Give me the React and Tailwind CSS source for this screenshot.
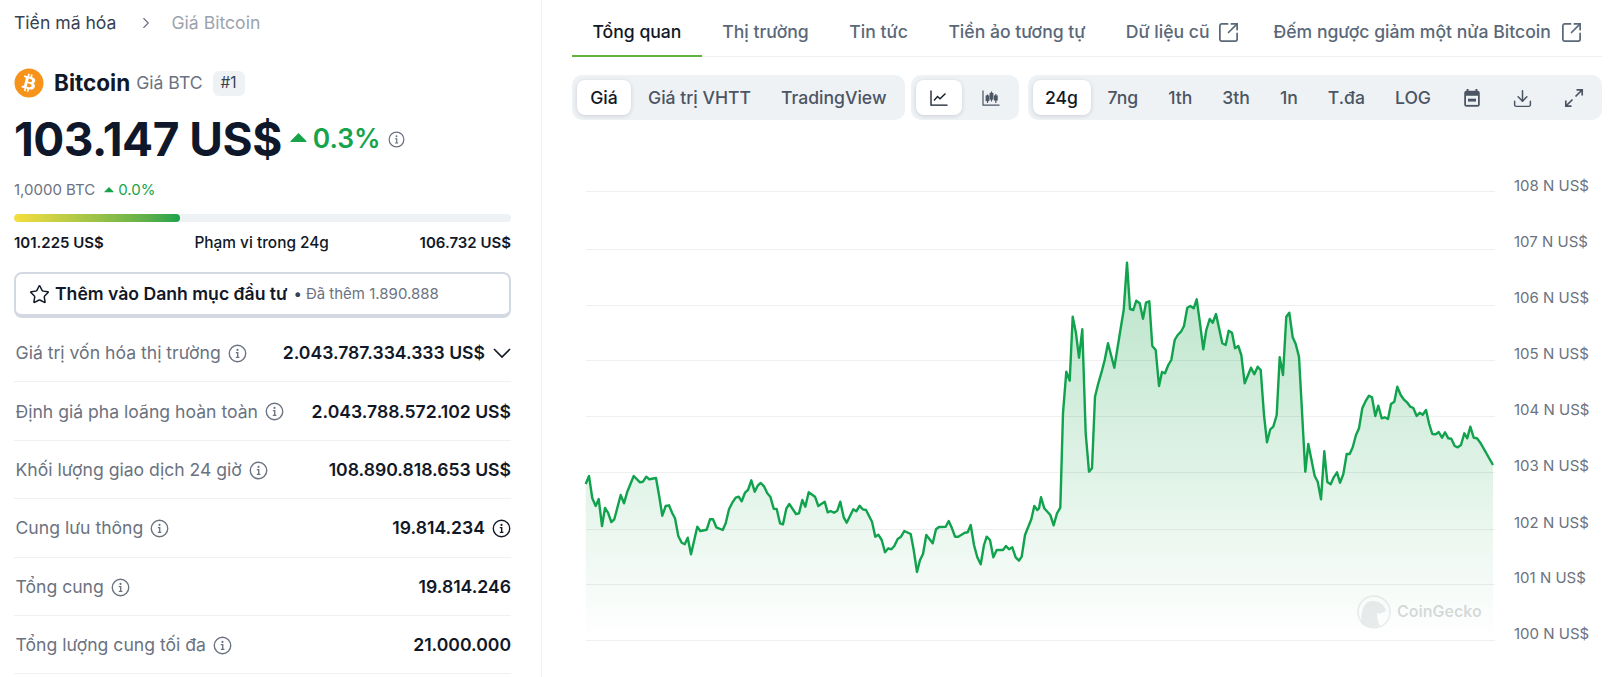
import { Star, ChevronRight, SquareArrowOutUpRight, Download } from 'lucide-react';
import { FaBitcoin } from 'react-icons/fa';

// traced from the reference: [x, y] in crop pixels (3x), converted to page coords below
const leftTrace = [50,732,60,708,70,775,80,798,89,777,99,858,108,804,117,818,127,846,136,838,155,765,165,790,175,755,194,708,213,727,222,725,232,710,241,718,261,714,271,770,280,827,290,798,300,796,310,820,318,835,328,888,338,908,347,913,356,893,366,943,385,860,394,873,413,869,423,838,432,838,442,862,461,870,470,850,480,808,490,788,500,773,509,770,518,784,528,758,537,750,547,721,557,755,566,737,575,729,585,739,595,760,604,770,614,806,623,807,633,850,642,853,652,806,661,792,681,822,690,820,700,780,709,800,719,757,738,770,748,798,767,785,776,817,785,813,795,818,805,812,814,785,824,832,833,848,853,808,862,814,872,797,881,808,891,810,909,845,919,890,928,884,938,900,948,937,958,925,967,928,976,918,986,897,996,890,1006,873,1025,882,1034,930,1044,996,1053,960,1062,942,1072,885,1091,910,1101,868,1110,861,1130,860,1139,843,1149,865,1158,890,1168,890,1187,878,1196,877,1205,855,1215,915,1225,952,1235,973,1245,915,1253,890,1263,900,1273,952,1283,930,1302,930,1311,918,1320,928,1330,922,1340,952,1350,962,1358,950,1368,885,1387,838,1396,798,1405,810];
const rightTrace = [0,805,6,772,16,805,34,825,44,856,54,820,64,803,72,520,82,395,92,422,101,230,111,280,120,353,130,268,140,580,150,695,159,685,168,470,178,430,188,395,197,360,207,310,226,383,245,265,254,210,264,68,273,207,283,210,292,182,302,190,312,236,321,188,331,184,340,318,350,330,360,438,369,396,378,400,388,375,397,360,407,300,416,285,426,275,435,258,445,203,454,198,464,205,473,178,483,250,493,328,502,270,512,237,521,248,531,222,550,310,560,315,569,272,579,278,588,325,598,318,607,345,617,430,636,383,646,403,656,380,665,390,675,525,684,607,694,568,703,560,713,525,722,352,732,405,742,230,751,218,761,292,770,312,780,350,799,695,808,612,827,708,836,725,846,778,856,634,865,726,875,733,884,712,894,697,903,728,913,703,923,642,932,642,941,622,951,585,960,565,970,505,980,483,990,467,999,472,1009,528,1018,497,1028,535,1037,532,1047,537,1056,492,1066,485,1075,440,1085,465,1094,478,1104,487,1114,500,1123,504,1133,528,1142,518,1151,524,1161,510,1170,550,1180,582,1190,583,1199,576,1209,593,1218,577,1228,595,1237,596,1247,618,1256,622,1266,615,1276,580,1285,595,1294,560,1304,593,1314,595,1324,608,1362,675];

const toPoints = (trace, originX) => {
    const pts = [];
    for (let i = 0; i < trace.length; i += 2) {
        pts.push(`${(originX + trace[i] / 3).toFixed(1)},${(240 + trace[i + 1] / 3).toFixed(1)}`);
    }
    return pts;
};
const linePoints = [...toPoints(leftTrace, 570), ...toPoints(rightTrace, 1040)].join(' ');
const areaPoints = `586.7,640 ${linePoints} 1494,640`;

const gridLines = [191, 249, 305, 360, 416, 472, 529, 584, 640];
const axisLabels = [
    ['108 N US$', 186], ['107 N US$', 242], ['106 N US$', 298], ['105 N US$', 354], ['104 N US$', 410],
    ['103 N US$', 466], ['102 N US$', 523], ['101 N US$', 578], ['100 N US$', 634],
];

const stats = [
    { label: 'Giá trị vốn hóa thị trường', value: '2.043.787.334.333 US$', chevron: true },
    { label: 'Định giá pha loãng hoàn toàn', value: '2.043.788.572.102 US$' },
    { label: 'Khối lượng giao dịch 24 giờ', value: '108.890.818.653 US$' },
    { label: 'Cung lưu thông', value: '19.814.234', info: true },
    { label: 'Tổng cung', value: '19.814.246' },
    { label: 'Tổng lượng cung tối đa', value: '21.000.000' },
];

const tabs = [
    { name: 'Thị trường', pad: 'px-[20.3px]' },
    { name: 'Tin tức', pad: 'px-[20.3px]' },
    { name: 'Tiền ảo tương tự', pad: 'px-[20.3px]' },
    { name: 'Dữ liệu cũ', pad: 'pl-[20px] pr-[14px]', external: 'ml-[7px]' },
    { name: 'Đếm ngược giảm một nửa Bitcoin', pad: 'px-[20px]', external: 'ml-[9px]' },
];

function InfoIcon({ className }) {
    return (
        <svg viewBox="0 0 18 18" fill="none" stroke="currentColor" className={className}>
            <circle cx="9" cy="9" r="7.8" strokeWidth="1.3" />
            <circle cx="9" cy="5.6" r="1" fill="currentColor" stroke="none" />
            <path d="M7.4 8.2H9.2V12.6M7.4 12.7H10.8" strokeWidth="1.3" />
        </svg>
    );
}

function Caret({ className }) {
    return (
        <svg viewBox="0 0 16 10" className={className}>
            <path d="M8 .8 15.4 8.4a.5.5 0 0 1-.4.8H1a.5.5 0 0 1-.4-.8Z" fill="currentColor" />
        </svg>
    );
}

function LineIcon() {
    return (
        <svg viewBox="0 0 18 18" fill="none" stroke="currentColor" strokeWidth="1.3" className="w-[18px] h-[18px]">
            <path d="M1 1.5V16.2H17.5" />
            <path d="M4 11.5 7.5 7.5 10 9.8 15.5 4.5" />
        </svg>
    );
}

function CandleIcon() {
    return (
        <svg viewBox="0 0 18 18" fill="none" stroke="currentColor" strokeWidth="1.2" className="w-[18px] h-[18px]">
            <path d="M1 1.5V16.2H17.5" />
            <path d="M5.5 5.5V14M9.5 2.5V12.5M13.8 5V14" />
            <rect x="4.2" y="7" width="2.6" height="4.5" fill="currentColor" />
            <rect x="8.2" y="4.5" width="2.6" height="5.5" fill="currentColor" />
            <rect x="12.5" y="7" width="2.6" height="4" fill="currentColor" />
        </svg>
    );
}

function CalendarIcon() {
    return (
        <svg viewBox="0 0 18 18" className="w-[20px] h-[20px]">
            <path d="M5 .8V3M13 .8V3" stroke="currentColor" strokeWidth="1.8" />
            <rect x="2" y="2.4" width="14" height="14.4" rx="2" fill="currentColor" />
            <rect x="3.6" y="7" width="10.8" height="8.2" fill="#eff2f5" />
            <rect x="5.4" y="9.6" width="7.2" height="2.6" fill="currentColor" />
        </svg>
    );
}

function ExpandIcon() {
    return (
        <svg viewBox="0 0 20 20" fill="none" stroke="currentColor" strokeWidth="1.7" className="w-[20px] h-[20px]">
            <path d="M12.5 1.8H18.2V7.5M18 2 11.5 8.5M1.8 12.5V18.2H7.5M2 18 8.5 11.5" />
        </svg>
    );
}

function Pill({ active, children, className = '' }) {
    return (
        <div className={`h-[35px] pt-[1px] flex items-center justify-center rounded-lg ${active ? 'bg-white shadow-[0_1px_4px_rgba(15,23,42,0.16)] text-[#111827]' : 'text-[#4b5563]'} ${className}`}>
            {children}
        </div>
    );
}

function Chart() {
    return (
        <svg viewBox="573 120 1040 557" className="w-[1040px] h-[557px] block">
            <defs>
                <linearGradient id="areaFill" gradientUnits="userSpaceOnUse" x1="0" y1="262" x2="0" y2="640">
                    <stop offset="0" stopColor="#16a34a" stopOpacity="0.3" />
                    <stop offset="1" stopColor="#16a34a" stopOpacity="0" />
                </linearGradient>
            </defs>
            <polygon points={areaPoints} fill="url(#areaFill)" />
            {gridLines.map((y) => (
                <line key={y} x1="587" x2="1496" y1={y + 0.5} y2={y + 0.5} stroke="#111827" strokeOpacity="0.07" />
            ))}
            <polyline points={linePoints} fill="none" stroke="#10a24c" strokeWidth="2.4" strokeLinejoin="round" />
            {axisLabels.map(([text, y]) => (
                <text key={text} x="1515" y={y + 5} fontSize="15" fill="#6b7280">{text}</text>
            ))}
            {/* watermark */}
            <g opacity="0.13">
                <circle cx="1375" cy="612" r="16" fill="none" stroke="#6b7280" strokeWidth="1.5" />
                <path d="M1362 623C1362 608 1366 601 1374 601 1381 601 1385 605 1387 610 1384 614 1380 614 1378 613 1378 618 1379 622 1381 626 1374 629 1366 628 1362 623Z" fill="#6b7280" />
            </g>
            <text x="1398" y="617" fontSize="16" fontWeight="600" fill="#111827" fillOpacity="0.18">CoinGecko</text>
        </svg>
    );
}

export default function App() {
    return (
        <div className="w-[1613px] h-[677px] overflow-hidden bg-white flex font-['Inter',sans-serif] text-[#111827]">
            {/* Left column */}
            <div className="w-[542px] pl-[14px] pr-[30px] border-r border-[#eff2f5] shrink-0">
                <div className="h-[46px] flex items-center text-[17.6px]">
                    <span className="text-[#374151]">Tiền mã hóa</span>
                    <ChevronRight size={18} strokeWidth={1.5} className="text-[#6b7280] ml-[21px] mr-[16px]" />
                    <span className="text-[#9ca3af]">Giá Bitcoin</span>
                </div>
                <div className="h-[38px] mt-[18px] flex items-center">
                    <FaBitcoin size={30} className="text-[#f7931a]" />
                    <span className="ml-[10px] text-[22.5px] font-bold">Bitcoin</span>
                    <span className="ml-[6px] text-[17.6px] text-[#6b7280]">Giá BTC</span>
                    <span className="ml-[10px] h-[25px] px-[8px] flex items-center rounded-md bg-[#eff2f5] text-[15.4px] text-[#374151]">#1</span>
                </div>
                <div className="h-[62px] mt-[6px] flex items-center">
                    <span className="text-[46px] font-bold tracking-[-0.5px] text-[#0f172a]">103.147 US$</span>
                    <Caret className="ml-[8px] w-[17px] h-[11px] text-[#16a34a] mb-[4px]" />
                    <span className="ml-[6px] text-[26.4px] font-semibold text-[#16a34a]">0.3%</span>
                    <InfoIcon className="ml-[7px] w-[17px] h-[17px] text-[#6b7280]" />
                </div>
                <div className="h-[24px] mt-[8px] flex items-center text-[15px] text-[#6b7280]">
                    <span>1,0000 BTC</span>
                    <Caret className="ml-[9px] w-[10px] h-[7px] text-[#16a34a] mb-[2px]" />
                    <span className="ml-[4px] text-[#16a34a]">0.0%</span>
                </div>
                <div className="mt-[12px] h-[8px] rounded-full bg-[#eff2f5] overflow-hidden">
                    <div className="h-full w-[33.5%] rounded-full bg-gradient-to-r from-[#f5de3c] to-[#16a34a]" />
                </div>
                <div className="mt-[9px] h-[24px] flex items-center justify-between text-[15px] font-semibold">
                    <span>101.225 US$</span>
                    <span className="font-medium text-[15.4px]">Phạm vi trong 24g</span>
                    <span>106.732 US$</span>
                </div>
                <div className="mt-[17px] h-[46px] flex items-center pl-[13px] rounded-lg border-2 border-b-4 border-[#d3d9e2] bg-white">
                    <Star size={21} strokeWidth={1.7} className="text-[#111827]" />
                    <span className="ml-[5px] text-[17.6px] font-semibold">Thêm vào Danh mục đầu tư</span>
                    <span className="ml-[6px] text-[#374151] text-[15px]">•</span>
                    <span className="ml-[4px] text-[15px] text-[#6b7280]">Đã thêm 1.890.888</span>
                </div>
                <div className="mt-[6px]">
                    {stats.map((row) => (
                        <div key={row.label} className="h-[58.4px] pt-[1.5px] flex items-center justify-between border-b border-[#eff2f5] pl-[1.5px]">
                            <span className="flex items-center text-[17.6px] text-[#6b7280]">
                                {row.label}
                                <InfoIcon className="ml-[7px] w-[19px] h-[19px] text-[#6b7280]" />
                            </span>
                            <span className="flex items-center text-[17.6px] font-semibold">
                                {row.value}
                                {row.chevron && (
                                    <svg viewBox="0 0 18 10" fill="none" stroke="currentColor" strokeWidth="1.7" className="ml-[8px] w-[18px] h-[10px]">
                                        <path d="M1 1 9 9 17 1" />
                                    </svg>
                                )}
                                {row.info && <InfoIcon className="ml-[7px] w-[19px] h-[19px] text-[#111827]" />}
                            </span>
                        </div>
                    ))}
                </div>
            </div>

            {/* Right column */}
            <div className="flex-1 pl-[30px]">
                <div className="w-[1030px] h-[57px] flex items-center border-b border-[#eff2f5] text-[17.6px] font-medium text-[#5b6878] whitespace-nowrap">
                    <div className="relative h-full px-[20.5px] flex items-center text-[#111827] pt-[9px]">
                        Tổng quan
                        <span className="absolute left-0 right-0 bottom-[-1px] h-[2px] bg-[#62b33e]" />
                    </div>
                    {tabs.map((tab) => (
                        <div key={tab.name} className={`h-full flex items-center pt-[9px] shrink-0 ${tab.pad}`}>
                            {tab.name}
                            {tab.external && <SquareArrowOutUpRight size={23} strokeWidth={1.8} className={tab.external} />}
                        </div>
                    ))}
                </div>

                <div className="mt-[18px] flex text-[17.6px] font-medium">
                    <div className="h-[45px] p-[5px] rounded-[10px] bg-[#eff2f5] flex gap-[4px]">
                        <Pill active className="w-[54px]">Giá</Pill>
                        <Pill className="px-[13px]">Giá trị VHTT</Pill>
                        <Pill className="px-[13px]">TradingView</Pill>
                    </div>
                    <div className="ml-[6px] h-[45px] p-[5px] rounded-[10px] bg-[#eff2f5] flex gap-[6px]">
                        <Pill active className="w-[46px]"><LineIcon /></Pill>
                        <Pill className="w-[46px]"><CandleIcon /></Pill>
                    </div>
                    <div className="ml-[9px] h-[45px] p-[5px] rounded-[10px] bg-[#eff2f5] flex gap-[4px]">
                        <Pill active className="w-[58px]">24g</Pill>
                        <Pill className="px-[13px]">7ng</Pill>
                        <Pill className="px-[13px]">1th</Pill>
                        <Pill className="px-[13px]">3th</Pill>
                        <Pill className="px-[13px]">1n</Pill>
                        <Pill className="px-[13px]">T.đa</Pill>
                        <Pill className="px-[13px]">LOG</Pill>
                        <Pill className="w-[47px]"><CalendarIcon /></Pill>
                        <Pill className="w-[47px]"><Download size={21} strokeWidth={1.7} /></Pill>
                        <Pill className="w-[47px]"><ExpandIcon /></Pill>
                    </div>
                </div>

                <Chart />
            </div>
        </div>
    );
}
